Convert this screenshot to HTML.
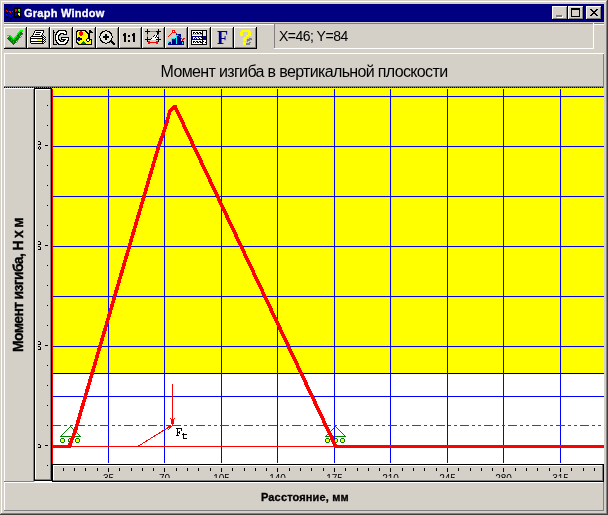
<!DOCTYPE html>
<html><head><meta charset="utf-8"><style>
html,body{margin:0;padding:0;}
body{width:608px;height:515px;position:relative;overflow:hidden;background:#d4d0c8;font-family:"Liberation Sans",sans-serif;}
div{position:absolute;}
.t{will-change:transform;}
</style></head><body>
<div style="left:1px;top:1px;width:605px;height:1px;background:#ffffff;"></div>
<div style="left:1px;top:1px;width:1px;height:512px;background:#ffffff;"></div>
<div style="left:606px;top:1px;width:1px;height:513px;background:#808080;"></div>
<div style="left:1px;top:513px;width:606px;height:1px;background:#808080;"></div>
<div style="left:607px;top:0px;width:1px;height:515px;background:#404040;"></div>
<div style="left:0px;top:514px;width:608px;height:1px;background:#404040;"></div>
<div style="left:4px;top:4px;width:600px;height:18px;background:#000080;"></div>
<div style="left:4px;top:23px;width:600px;height:1px;background:#808080;"></div>
<div style="left:4px;top:24px;width:270px;height:1px;background:#ffffff;"></div>
<div style="left:594px;top:24px;width:10px;height:1px;background:#ffffff;"></div>
<div style="left:4px;top:27px;width:22px;height:1px;background:#ffffff;"></div>
<div style="left:4px;top:27px;width:1px;height:21px;background:#ffffff;"></div>
<div style="left:25px;top:28px;width:1px;height:20px;background:#808080;"></div>
<div style="left:5px;top:47px;width:21px;height:1px;background:#808080;"></div>
<div style="left:26px;top:27px;width:1px;height:22px;background:#000;"></div>
<div style="left:4px;top:48px;width:23px;height:1px;background:#000;"></div>
<div style="left:27px;top:27px;width:22px;height:1px;background:#ffffff;"></div>
<div style="left:27px;top:27px;width:1px;height:21px;background:#ffffff;"></div>
<div style="left:48px;top:28px;width:1px;height:20px;background:#808080;"></div>
<div style="left:28px;top:47px;width:21px;height:1px;background:#808080;"></div>
<div style="left:49px;top:27px;width:1px;height:22px;background:#000;"></div>
<div style="left:27px;top:48px;width:23px;height:1px;background:#000;"></div>
<div style="left:50px;top:27px;width:22px;height:1px;background:#ffffff;"></div>
<div style="left:50px;top:27px;width:1px;height:21px;background:#ffffff;"></div>
<div style="left:71px;top:28px;width:1px;height:20px;background:#808080;"></div>
<div style="left:51px;top:47px;width:21px;height:1px;background:#808080;"></div>
<div style="left:72px;top:27px;width:1px;height:22px;background:#000;"></div>
<div style="left:50px;top:48px;width:23px;height:1px;background:#000;"></div>
<div style="left:73px;top:27px;width:22px;height:1px;background:#ffffff;"></div>
<div style="left:73px;top:27px;width:1px;height:21px;background:#ffffff;"></div>
<div style="left:94px;top:28px;width:1px;height:20px;background:#808080;"></div>
<div style="left:74px;top:47px;width:21px;height:1px;background:#808080;"></div>
<div style="left:95px;top:27px;width:1px;height:22px;background:#000;"></div>
<div style="left:73px;top:48px;width:23px;height:1px;background:#000;"></div>
<div style="left:96px;top:27px;width:22px;height:1px;background:#ffffff;"></div>
<div style="left:96px;top:27px;width:1px;height:21px;background:#ffffff;"></div>
<div style="left:117px;top:28px;width:1px;height:20px;background:#808080;"></div>
<div style="left:97px;top:47px;width:21px;height:1px;background:#808080;"></div>
<div style="left:118px;top:27px;width:1px;height:22px;background:#000;"></div>
<div style="left:96px;top:48px;width:23px;height:1px;background:#000;"></div>
<div style="left:119px;top:27px;width:22px;height:1px;background:#ffffff;"></div>
<div style="left:119px;top:27px;width:1px;height:21px;background:#ffffff;"></div>
<div style="left:140px;top:28px;width:1px;height:20px;background:#808080;"></div>
<div style="left:120px;top:47px;width:21px;height:1px;background:#808080;"></div>
<div style="left:141px;top:27px;width:1px;height:22px;background:#000;"></div>
<div style="left:119px;top:48px;width:23px;height:1px;background:#000;"></div>
<div style="left:142px;top:27px;width:22px;height:1px;background:#ffffff;"></div>
<div style="left:142px;top:27px;width:1px;height:21px;background:#ffffff;"></div>
<div style="left:163px;top:28px;width:1px;height:20px;background:#808080;"></div>
<div style="left:143px;top:47px;width:21px;height:1px;background:#808080;"></div>
<div style="left:164px;top:27px;width:1px;height:22px;background:#000;"></div>
<div style="left:142px;top:48px;width:23px;height:1px;background:#000;"></div>
<div style="left:165px;top:27px;width:22px;height:1px;background:#ffffff;"></div>
<div style="left:165px;top:27px;width:1px;height:21px;background:#ffffff;"></div>
<div style="left:186px;top:28px;width:1px;height:20px;background:#808080;"></div>
<div style="left:166px;top:47px;width:21px;height:1px;background:#808080;"></div>
<div style="left:187px;top:27px;width:1px;height:22px;background:#000;"></div>
<div style="left:165px;top:48px;width:23px;height:1px;background:#000;"></div>
<div style="left:188px;top:27px;width:22px;height:1px;background:#ffffff;"></div>
<div style="left:188px;top:27px;width:1px;height:21px;background:#ffffff;"></div>
<div style="left:209px;top:28px;width:1px;height:20px;background:#808080;"></div>
<div style="left:189px;top:47px;width:21px;height:1px;background:#808080;"></div>
<div style="left:210px;top:27px;width:1px;height:22px;background:#000;"></div>
<div style="left:188px;top:48px;width:23px;height:1px;background:#000;"></div>
<div style="left:211px;top:27px;width:22px;height:1px;background:#ffffff;"></div>
<div style="left:211px;top:27px;width:1px;height:21px;background:#ffffff;"></div>
<div style="left:232px;top:28px;width:1px;height:20px;background:#808080;"></div>
<div style="left:212px;top:47px;width:21px;height:1px;background:#808080;"></div>
<div style="left:233px;top:27px;width:1px;height:22px;background:#000;"></div>
<div style="left:211px;top:48px;width:23px;height:1px;background:#000;"></div>
<div style="left:234px;top:27px;width:22px;height:1px;background:#ffffff;"></div>
<div style="left:234px;top:27px;width:1px;height:21px;background:#ffffff;"></div>
<div style="left:255px;top:28px;width:1px;height:20px;background:#808080;"></div>
<div style="left:235px;top:47px;width:21px;height:1px;background:#808080;"></div>
<div style="left:256px;top:27px;width:1px;height:22px;background:#000;"></div>
<div style="left:234px;top:48px;width:23px;height:1px;background:#000;"></div>
<div style="left:274px;top:23px;width:319px;height:1px;background:#808080;"></div>
<div style="left:274px;top:23px;width:1px;height:25px;background:#808080;"></div>
<div style="left:274px;top:48px;width:320px;height:1px;background:#ffffff;"></div>
<div style="left:593px;top:23px;width:1px;height:26px;background:#ffffff;"></div>
<div style="left:4px;top:53px;width:600px;height:1px;background:#ffffff;"></div>
<div style="left:4px;top:53px;width:1px;height:34px;background:#ffffff;"></div>
<div style="left:603px;top:54px;width:1px;height:33px;background:#808080;"></div>
<div style="left:4px;top:86px;width:600px;height:1px;background:#808080;"></div>
<div style="left:4px;top:87px;width:600px;height:1px;background:repeating-linear-gradient(90deg,#000 0 1px,#808080 1px 2px)"></div>
<div style="left:4px;top:88px;width:30px;height:1px;background:#ffffff;"></div>
<div style="left:4px;top:88px;width:1px;height:393px;background:#ffffff;"></div>
<div style="left:33px;top:89px;width:1px;height:393px;background:#808080;"></div>
<div style="left:4px;top:481px;width:30px;height:1px;background:#808080;"></div>
<div style="left:34px;top:88px;width:18px;height:1px;background:#000;"></div>
<div style="left:34px;top:88px;width:1px;height:393px;background:#000;"></div>
<div style="left:51px;top:88px;width:1px;height:393px;background:#000;"></div>
<div style="left:34px;top:480px;width:18px;height:1px;background:#000;"></div>
<div style="left:35px;top:89px;width:15px;height:1px;background:#ffffff;"></div>
<div style="left:35px;top:89px;width:1px;height:390px;background:#ffffff;"></div>
<div style="left:50px;top:89px;width:1px;height:391px;background:#808080;"></div>
<div style="left:35px;top:479px;width:16px;height:1px;background:#808080;"></div>
<div style="left:4px;top:482px;width:600px;height:1px;background:#ffffff;"></div>
<div style="left:35px;top:481px;width:17px;height:1px;background:#ffffff;"></div>
<div style="left:4px;top:482px;width:1px;height:29px;background:#ffffff;"></div>
<div style="left:603px;top:482px;width:1px;height:29px;background:#808080;"></div>
<div style="left:4px;top:510px;width:600px;height:1px;background:#808080;"></div>
<div style="left:52px;top:464px;width:552px;height:1px;background:#000;"></div>
<div style="left:52px;top:464px;width:1px;height:18px;background:#000;"></div>
<div style="left:603px;top:464px;width:1px;height:18px;background:#000;"></div>
<div style="left:52px;top:481px;width:552px;height:1px;background:#000;"></div>
<div style="left:53px;top:465px;width:549px;height:1px;background:#ffffff;"></div>
<div style="left:53px;top:465px;width:1px;height:15px;background:#ffffff;"></div>
<div style="left:602px;top:465px;width:1px;height:16px;background:#808080;"></div>
<div style="left:53px;top:480px;width:550px;height:1px;background:#808080;"></div>
<svg style="position:absolute;left:0;top:0" width="608" height="515" shape-rendering="crispEdges"><rect x="53" y="88" width="551" height="285" fill="#ffff00"/><rect x="52" y="88" width="1" height="1" fill="#ffff00"/><rect x="53" y="373" width="551" height="1" fill="#000000"/><rect x="53" y="374" width="551" height="90" fill="#ffffff"/><rect x="52" y="89" width="1" height="375" fill="#ff0000"/><rect x="70" y="426" width="1" height="1" fill="#008000"/><rect x="70" y="426" width="1" height="1" fill="#008000"/><rect x="69" y="427" width="1" height="1" fill="#008000"/><rect x="71" y="427" width="1" height="1" fill="#008000"/><rect x="68" y="428" width="1" height="1" fill="#008000"/><rect x="72" y="428" width="1" height="1" fill="#008000"/><rect x="67" y="429" width="1" height="1" fill="#008000"/><rect x="73" y="429" width="1" height="1" fill="#008000"/><rect x="66" y="430" width="1" height="1" fill="#008000"/><rect x="74" y="430" width="1" height="1" fill="#008000"/><rect x="65" y="431" width="1" height="1" fill="#008000"/><rect x="75" y="431" width="1" height="1" fill="#008000"/><rect x="64" y="432" width="1" height="1" fill="#008000"/><rect x="76" y="432" width="1" height="1" fill="#008000"/><rect x="63" y="433" width="1" height="1" fill="#008000"/><rect x="77" y="433" width="1" height="1" fill="#008000"/><rect x="62" y="434" width="1" height="1" fill="#008000"/><rect x="78" y="434" width="1" height="1" fill="#008000"/><rect x="61" y="435" width="1" height="1" fill="#008000"/><rect x="79" y="435" width="1" height="1" fill="#008000"/><rect x="60" y="436" width="1" height="1" fill="#008000"/><rect x="80" y="436" width="1" height="1" fill="#008000"/><rect x="60" y="436" width="21" height="1" fill="#008000"/><rect x="61" y="438" width="3" height="1" fill="#008000"/><rect x="60" y="439" width="1" height="3" fill="#008000"/><rect x="64" y="439" width="1" height="3" fill="#008000"/><rect x="61" y="442" width="3" height="1" fill="#008000"/><rect x="61" y="439" width="3" height="3" fill="#ffff00"/><rect x="69" y="438" width="3" height="1" fill="#008000"/><rect x="68" y="439" width="1" height="3" fill="#008000"/><rect x="72" y="439" width="1" height="3" fill="#008000"/><rect x="69" y="442" width="3" height="1" fill="#008000"/><rect x="69" y="439" width="3" height="3" fill="#ffff00"/><rect x="76" y="438" width="3" height="1" fill="#008000"/><rect x="75" y="439" width="1" height="3" fill="#008000"/><rect x="79" y="439" width="1" height="3" fill="#008000"/><rect x="76" y="442" width="3" height="1" fill="#008000"/><rect x="76" y="439" width="3" height="3" fill="#ffff00"/><rect x="335" y="426" width="1" height="1" fill="#008000"/><rect x="335" y="426" width="1" height="1" fill="#008000"/><rect x="334" y="427" width="1" height="1" fill="#008000"/><rect x="336" y="427" width="1" height="1" fill="#008000"/><rect x="333" y="428" width="1" height="1" fill="#008000"/><rect x="337" y="428" width="1" height="1" fill="#008000"/><rect x="332" y="429" width="1" height="1" fill="#008000"/><rect x="338" y="429" width="1" height="1" fill="#008000"/><rect x="331" y="430" width="1" height="1" fill="#008000"/><rect x="339" y="430" width="1" height="1" fill="#008000"/><rect x="330" y="431" width="1" height="1" fill="#008000"/><rect x="340" y="431" width="1" height="1" fill="#008000"/><rect x="329" y="432" width="1" height="1" fill="#008000"/><rect x="341" y="432" width="1" height="1" fill="#008000"/><rect x="328" y="433" width="1" height="1" fill="#008000"/><rect x="342" y="433" width="1" height="1" fill="#008000"/><rect x="327" y="434" width="1" height="1" fill="#008000"/><rect x="343" y="434" width="1" height="1" fill="#008000"/><rect x="326" y="435" width="1" height="1" fill="#008000"/><rect x="344" y="435" width="1" height="1" fill="#008000"/><rect x="325" y="436" width="1" height="1" fill="#008000"/><rect x="345" y="436" width="1" height="1" fill="#008000"/><rect x="325" y="436" width="21" height="1" fill="#008000"/><rect x="326" y="438" width="3" height="1" fill="#008000"/><rect x="325" y="439" width="1" height="3" fill="#008000"/><rect x="329" y="439" width="1" height="3" fill="#008000"/><rect x="326" y="442" width="3" height="1" fill="#008000"/><rect x="326" y="439" width="3" height="3" fill="#ffff00"/><rect x="334" y="438" width="3" height="1" fill="#008000"/><rect x="333" y="439" width="1" height="3" fill="#008000"/><rect x="337" y="439" width="1" height="3" fill="#008000"/><rect x="334" y="442" width="3" height="1" fill="#008000"/><rect x="334" y="439" width="3" height="3" fill="#ffff00"/><rect x="341" y="438" width="3" height="1" fill="#008000"/><rect x="340" y="439" width="1" height="3" fill="#008000"/><rect x="344" y="439" width="1" height="3" fill="#008000"/><rect x="341" y="442" width="3" height="1" fill="#008000"/><rect x="341" y="439" width="3" height="3" fill="#ffff00"/><rect x="53" y="96" width="551" height="1" fill="#0000ff"/><rect x="53" y="146" width="551" height="1" fill="#0000ff"/><rect x="53" y="196" width="551" height="1" fill="#0000ff"/><rect x="53" y="246" width="551" height="1" fill="#0000ff"/><rect x="53" y="296" width="551" height="1" fill="#0000ff"/><rect x="53" y="346" width="551" height="1" fill="#0000ff"/><rect x="53" y="396" width="551" height="1" fill="#0000ff"/><rect x="53" y="446" width="551" height="1" fill="#0000ff"/><rect x="108" y="89" width="1" height="374" fill="#0000ff"/><rect x="164" y="89" width="1" height="374" fill="#0000ff"/><rect x="221" y="89" width="1" height="374" fill="#0000ff"/><rect x="277" y="89" width="1" height="374" fill="#0000ff"/><rect x="334" y="89" width="1" height="374" fill="#0000ff"/><rect x="390" y="89" width="1" height="374" fill="#0000ff"/><rect x="447" y="89" width="1" height="374" fill="#0000ff"/><rect x="503" y="89" width="1" height="374" fill="#0000ff"/><rect x="560" y="89" width="1" height="374" fill="#0000ff"/><rect x="53" y="425" width="8" height="1" fill="#ff0000"/><rect x="64" y="425" width="3" height="1" fill="#ff0000"/><rect x="70" y="425" width="3" height="1" fill="#ff0000"/><rect x="76" y="425" width="9" height="1" fill="#ff0000"/><rect x="88" y="425" width="3" height="1" fill="#ff0000"/><rect x="94" y="425" width="3" height="1" fill="#ff0000"/><rect x="100" y="425" width="9" height="1" fill="#ff0000"/><rect x="112" y="425" width="3" height="1" fill="#ff0000"/><rect x="118" y="425" width="3" height="1" fill="#ff0000"/><rect x="124" y="425" width="9" height="1" fill="#ff0000"/><rect x="136" y="425" width="3" height="1" fill="#ff0000"/><rect x="142" y="425" width="3" height="1" fill="#ff0000"/><rect x="148" y="425" width="9" height="1" fill="#ff0000"/><rect x="160" y="425" width="3" height="1" fill="#ff0000"/><rect x="166" y="425" width="3" height="1" fill="#ff0000"/><rect x="172" y="425" width="9" height="1" fill="#ff0000"/><rect x="184" y="425" width="3" height="1" fill="#ff0000"/><rect x="190" y="425" width="3" height="1" fill="#ff0000"/><rect x="196" y="425" width="9" height="1" fill="#ff0000"/><rect x="208" y="425" width="3" height="1" fill="#ff0000"/><rect x="214" y="425" width="3" height="1" fill="#ff0000"/><rect x="220" y="425" width="9" height="1" fill="#ff0000"/><rect x="232" y="425" width="3" height="1" fill="#ff0000"/><rect x="238" y="425" width="3" height="1" fill="#ff0000"/><rect x="244" y="425" width="9" height="1" fill="#ff0000"/><rect x="256" y="425" width="3" height="1" fill="#ff0000"/><rect x="262" y="425" width="3" height="1" fill="#ff0000"/><rect x="268" y="425" width="9" height="1" fill="#ff0000"/><rect x="280" y="425" width="3" height="1" fill="#ff0000"/><rect x="286" y="425" width="3" height="1" fill="#ff0000"/><rect x="292" y="425" width="9" height="1" fill="#ff0000"/><rect x="304" y="425" width="3" height="1" fill="#ff0000"/><rect x="310" y="425" width="3" height="1" fill="#ff0000"/><rect x="316" y="425" width="9" height="1" fill="#ff0000"/><rect x="328" y="425" width="3" height="1" fill="#ff0000"/><rect x="334" y="425" width="3" height="1" fill="#ff0000"/><rect x="340" y="425" width="9" height="1" fill="#ff0000"/><rect x="352" y="425" width="3" height="1" fill="#ff0000"/><rect x="358" y="425" width="3" height="1" fill="#ff0000"/><rect x="364" y="425" width="9" height="1" fill="#ff0000"/><rect x="376" y="425" width="3" height="1" fill="#ff0000"/><rect x="382" y="425" width="3" height="1" fill="#ff0000"/><rect x="388" y="425" width="9" height="1" fill="#ff0000"/><rect x="400" y="425" width="3" height="1" fill="#ff0000"/><rect x="406" y="425" width="3" height="1" fill="#ff0000"/><rect x="412" y="425" width="9" height="1" fill="#ff0000"/><rect x="424" y="425" width="3" height="1" fill="#ff0000"/><rect x="430" y="425" width="3" height="1" fill="#ff0000"/><rect x="436" y="425" width="9" height="1" fill="#ff0000"/><rect x="448" y="425" width="3" height="1" fill="#ff0000"/><rect x="454" y="425" width="3" height="1" fill="#ff0000"/><rect x="460" y="425" width="9" height="1" fill="#ff0000"/><rect x="472" y="425" width="3" height="1" fill="#ff0000"/><rect x="478" y="425" width="3" height="1" fill="#ff0000"/><rect x="484" y="425" width="9" height="1" fill="#ff0000"/><rect x="496" y="425" width="3" height="1" fill="#ff0000"/><rect x="502" y="425" width="3" height="1" fill="#ff0000"/><rect x="508" y="425" width="9" height="1" fill="#ff0000"/><rect x="520" y="425" width="3" height="1" fill="#ff0000"/><rect x="526" y="425" width="3" height="1" fill="#ff0000"/><rect x="532" y="425" width="9" height="1" fill="#ff0000"/><rect x="544" y="425" width="3" height="1" fill="#ff0000"/><rect x="550" y="425" width="3" height="1" fill="#ff0000"/><rect x="556" y="425" width="9" height="1" fill="#ff0000"/><rect x="568" y="425" width="3" height="1" fill="#ff0000"/><rect x="574" y="425" width="3" height="1" fill="#ff0000"/><rect x="580" y="425" width="9" height="1" fill="#ff0000"/><rect x="592" y="425" width="3" height="1" fill="#ff0000"/><rect x="598" y="425" width="3" height="1" fill="#ff0000"/><rect x="53" y="446" width="551" height="1" fill="#ff0000"/><polyline points="53,446.5 69.3,446.5 75.2,431 158.6,146.5 166.3,124.5 169.8,111 175,106.5 335.8,446.5 604,446.5" fill="none" stroke="#ff0000" stroke-width="3.6" stroke-linejoin="round" shape-rendering="crispEdges"/><rect x="172" y="384" width="1" height="41" fill="#ff0000"/><rect x="170" y="418" width="1" height="1" fill="#ff0000"/><rect x="174" y="418" width="1" height="1" fill="#ff0000"/><rect x="171" y="419" width="3" height="5" fill="#ff0000"/><line x1="138.5" y1="446" x2="171.5" y2="425.5" stroke="#ff0000" stroke-width="1" shape-rendering="crispEdges"/><rect x="166" y="425" width="1" height="1" fill="#ff0000"/><rect x="167" y="425" width="1" height="1" fill="#ff0000"/><rect x="168" y="425" width="1" height="1" fill="#ff0000"/><rect x="169" y="425" width="1" height="1" fill="#ff0000"/><rect x="170" y="425" width="1" height="1" fill="#ff0000"/><rect x="168" y="426" width="1" height="1" fill="#ff0000"/><rect x="169" y="426" width="1" height="1" fill="#ff0000"/><rect x="170" y="426" width="1" height="1" fill="#ff0000"/><rect x="171" y="426" width="1" height="1" fill="#ff0000"/><rect x="169" y="427" width="1" height="1" fill="#ff0000"/><rect x="170" y="427" width="1" height="1" fill="#ff0000"/><rect x="169" y="428" width="1" height="1" fill="#ff0000"/><rect x="168" y="429" width="1" height="1" fill="#ff0000"/><rect x="167" y="427" width="1" height="1" fill="#ff0000"/><rect x="176" y="428" width="1" height="1" fill="#000000"/><rect x="177" y="428" width="1" height="1" fill="#000000"/><rect x="178" y="428" width="1" height="1" fill="#000000"/><rect x="179" y="428" width="1" height="1" fill="#000000"/><rect x="180" y="428" width="1" height="1" fill="#000000"/><rect x="181" y="428" width="1" height="1" fill="#000000"/><rect x="177" y="429" width="1" height="1" fill="#000000"/><rect x="181" y="429" width="1" height="1" fill="#000000"/><rect x="177" y="430" width="1" height="1" fill="#000000"/><rect x="181" y="430" width="1" height="1" fill="#000000"/><rect x="177" y="431" width="1" height="1" fill="#000000"/><rect x="179" y="431" width="1" height="1" fill="#000000"/><rect x="177" y="432" width="1" height="1" fill="#000000"/><rect x="178" y="432" width="1" height="1" fill="#000000"/><rect x="179" y="432" width="1" height="1" fill="#000000"/><rect x="177" y="433" width="1" height="1" fill="#000000"/><rect x="179" y="433" width="1" height="1" fill="#000000"/><rect x="177" y="434" width="1" height="1" fill="#000000"/><rect x="176" y="435" width="1" height="1" fill="#000000"/><rect x="177" y="435" width="1" height="1" fill="#000000"/><rect x="178" y="435" width="1" height="1" fill="#000000"/><rect x="183" y="433" width="1" height="1" fill="#000000"/><rect x="182" y="434" width="1" height="1" fill="#000000"/><rect x="183" y="434" width="1" height="1" fill="#000000"/><rect x="184" y="434" width="1" height="1" fill="#000000"/><rect x="185" y="434" width="1" height="1" fill="#000000"/><rect x="186" y="434" width="1" height="1" fill="#000000"/><rect x="183" y="435" width="1" height="1" fill="#000000"/><rect x="183" y="436" width="1" height="1" fill="#000000"/><rect x="183" y="437" width="1" height="1" fill="#000000"/><rect x="183" y="438" width="1" height="1" fill="#000000"/><rect x="184" y="438" width="1" height="1" fill="#000000"/><rect x="185" y="438" width="1" height="1" fill="#000000"/><rect x="186" y="438" width="1" height="1" fill="#000000"/><rect x="47" y="105" width="1" height="1" fill="#000000"/><rect x="47" y="125" width="1" height="1" fill="#000000"/><rect x="45" y="145" width="3" height="1" fill="#000000"/><rect x="47" y="165" width="1" height="1" fill="#000000"/><rect x="47" y="185" width="1" height="1" fill="#000000"/><rect x="47" y="205" width="1" height="1" fill="#000000"/><rect x="47" y="225" width="1" height="1" fill="#000000"/><rect x="45" y="245" width="3" height="1" fill="#000000"/><rect x="47" y="265" width="1" height="1" fill="#000000"/><rect x="47" y="285" width="1" height="1" fill="#000000"/><rect x="47" y="305" width="1" height="1" fill="#000000"/><rect x="47" y="325" width="1" height="1" fill="#000000"/><rect x="45" y="345" width="3" height="1" fill="#000000"/><rect x="47" y="365" width="1" height="1" fill="#000000"/><rect x="47" y="385" width="1" height="1" fill="#000000"/><rect x="47" y="405" width="1" height="1" fill="#000000"/><rect x="47" y="425" width="1" height="1" fill="#000000"/><rect x="45" y="445" width="3" height="1" fill="#000000"/><rect x="47" y="465" width="1" height="1" fill="#000000"/><rect x="38" y="141" width="2" height="1" fill="#000000"/><rect x="40" y="142" width="1" height="2" fill="#000000"/><rect x="38" y="144" width="3" height="1" fill="#000000"/><rect x="39" y="146" width="1" height="1" fill="#000000"/><rect x="38" y="147" width="1" height="2" fill="#000000"/><rect x="40" y="147" width="1" height="2" fill="#000000"/><rect x="39" y="149" width="1" height="1" fill="#000000"/><rect x="38" y="241" width="2" height="1" fill="#000000"/><rect x="40" y="242" width="1" height="2" fill="#000000"/><rect x="38" y="244" width="3" height="1" fill="#000000"/><rect x="38" y="246" width="2" height="1" fill="#000000"/><rect x="40" y="247" width="1" height="2" fill="#000000"/><rect x="38" y="249" width="3" height="1" fill="#000000"/><rect x="38" y="341" width="2" height="1" fill="#000000"/><rect x="40" y="342" width="1" height="2" fill="#000000"/><rect x="38" y="344" width="3" height="1" fill="#000000"/><rect x="38" y="346" width="2" height="1" fill="#000000"/><rect x="40" y="347" width="1" height="2" fill="#000000"/><rect x="38" y="349" width="3" height="1" fill="#000000"/><rect x="38" y="444" width="2" height="1" fill="#000000"/><rect x="40" y="445" width="1" height="2" fill="#000000"/><rect x="38" y="447" width="3" height="1" fill="#000000"/><rect x="63" y="468" width="1" height="3" fill="#000000"/><rect x="74" y="468" width="1" height="3" fill="#000000"/><rect x="85" y="468" width="1" height="3" fill="#000000"/><rect x="97" y="468" width="1" height="3" fill="#000000"/><rect x="108" y="468" width="1" height="4" fill="#000000"/><rect x="119" y="468" width="1" height="3" fill="#000000"/><rect x="131" y="468" width="1" height="3" fill="#000000"/><rect x="142" y="468" width="1" height="3" fill="#000000"/><rect x="153" y="468" width="1" height="3" fill="#000000"/><rect x="164" y="468" width="1" height="4" fill="#000000"/><rect x="176" y="468" width="1" height="3" fill="#000000"/><rect x="187" y="468" width="1" height="3" fill="#000000"/><rect x="198" y="468" width="1" height="3" fill="#000000"/><rect x="210" y="468" width="1" height="3" fill="#000000"/><rect x="221" y="468" width="1" height="4" fill="#000000"/><rect x="232" y="468" width="1" height="3" fill="#000000"/><rect x="244" y="468" width="1" height="3" fill="#000000"/><rect x="255" y="468" width="1" height="3" fill="#000000"/><rect x="266" y="468" width="1" height="3" fill="#000000"/><rect x="277" y="468" width="1" height="4" fill="#000000"/><rect x="289" y="468" width="1" height="3" fill="#000000"/><rect x="300" y="468" width="1" height="3" fill="#000000"/><rect x="311" y="468" width="1" height="3" fill="#000000"/><rect x="323" y="468" width="1" height="3" fill="#000000"/><rect x="334" y="468" width="1" height="4" fill="#000000"/><rect x="345" y="468" width="1" height="3" fill="#000000"/><rect x="357" y="468" width="1" height="3" fill="#000000"/><rect x="368" y="468" width="1" height="3" fill="#000000"/><rect x="379" y="468" width="1" height="3" fill="#000000"/><rect x="390" y="468" width="1" height="4" fill="#000000"/><rect x="402" y="468" width="1" height="3" fill="#000000"/><rect x="413" y="468" width="1" height="3" fill="#000000"/><rect x="424" y="468" width="1" height="3" fill="#000000"/><rect x="436" y="468" width="1" height="3" fill="#000000"/><rect x="447" y="468" width="1" height="4" fill="#000000"/><rect x="458" y="468" width="1" height="3" fill="#000000"/><rect x="470" y="468" width="1" height="3" fill="#000000"/><rect x="481" y="468" width="1" height="3" fill="#000000"/><rect x="492" y="468" width="1" height="3" fill="#000000"/><rect x="503" y="468" width="1" height="4" fill="#000000"/><rect x="515" y="468" width="1" height="3" fill="#000000"/><rect x="526" y="468" width="1" height="3" fill="#000000"/><rect x="537" y="468" width="1" height="3" fill="#000000"/><rect x="549" y="468" width="1" height="3" fill="#000000"/><rect x="560" y="468" width="1" height="4" fill="#000000"/><rect x="571" y="468" width="1" height="3" fill="#000000"/><rect x="583" y="468" width="1" height="3" fill="#000000"/><rect x="594" y="468" width="1" height="3" fill="#000000"/></svg>
<div class="t" style="left:53px;top:466px;width:549px;height:12px;overflow:hidden"><div style="left:35px;top:7px;width:41px;text-align:center;font-size:10px;line-height:10px;margin-top:1px;color:#000">35</div><div style="left:91px;top:7px;width:41px;text-align:center;font-size:10px;line-height:10px;margin-top:1px;color:#000">70</div><div style="left:148px;top:7px;width:41px;text-align:center;font-size:10px;line-height:10px;margin-top:1px;color:#000">105</div><div style="left:204px;top:7px;width:41px;text-align:center;font-size:10px;line-height:10px;margin-top:1px;color:#000">140</div><div style="left:261px;top:7px;width:41px;text-align:center;font-size:10px;line-height:10px;margin-top:1px;color:#000">175</div><div style="left:317px;top:7px;width:41px;text-align:center;font-size:10px;line-height:10px;margin-top:1px;color:#000">210</div><div style="left:374px;top:7px;width:41px;text-align:center;font-size:10px;line-height:10px;margin-top:1px;color:#000">245</div><div style="left:430px;top:7px;width:41px;text-align:center;font-size:10px;line-height:10px;margin-top:1px;color:#000">280</div><div style="left:487px;top:7px;width:41px;text-align:center;font-size:10px;line-height:10px;margin-top:1px;color:#000">315</div></div>
<svg style="position:absolute;left:0;top:0" width="608" height="515" shape-rendering="crispEdges"><rect x="15" y="7" width="5" height="1" fill="#000"/><rect x="14" y="8" width="7" height="10" fill="#000"/><rect x="15" y="9" width="1" height="1" fill="#ff0000"/><rect x="16" y="9" width="1" height="1" fill="#ff0000"/><rect x="15" y="10" width="1" height="1" fill="#ff0000"/><rect x="16" y="10" width="1" height="1" fill="#ff0000"/><rect x="15" y="11" width="1" height="1" fill="#ff0000"/><rect x="18" y="9" width="1" height="1" fill="#00ff00"/><rect x="19" y="9" width="1" height="1" fill="#00ff00"/><rect x="18" y="10" width="1" height="1" fill="#00ff00"/><rect x="19" y="10" width="1" height="1" fill="#00ff00"/><rect x="19" y="11" width="1" height="1" fill="#00ff00"/><rect x="15" y="13" width="1" height="1" fill="#0000ff"/><rect x="16" y="13" width="1" height="1" fill="#0000ff"/><rect x="15" y="14" width="1" height="1" fill="#0000ff"/><rect x="16" y="14" width="1" height="1" fill="#0000ff"/><rect x="15" y="15" width="1" height="1" fill="#0000ff"/><rect x="18" y="13" width="1" height="1" fill="#ffff00"/><rect x="19" y="13" width="1" height="1" fill="#ffff00"/><rect x="18" y="14" width="1" height="1" fill="#ffff00"/><rect x="19" y="14" width="1" height="1" fill="#ffff00"/><rect x="19" y="15" width="1" height="1" fill="#ffff00"/><rect x="6" y="8" width="1" height="1" fill="#000"/><rect x="7" y="9" width="1" height="1" fill="#000"/><rect x="9" y="9" width="1" height="1" fill="#000"/><rect x="10" y="9" width="1" height="1" fill="#000"/><rect x="12" y="9" width="1" height="1" fill="#000"/><rect x="6" y="12" width="1" height="1" fill="#000"/><rect x="10" y="13" width="1" height="1" fill="#000"/><rect x="12" y="13" width="1" height="1" fill="#000"/><rect x="6" y="16" width="1" height="1" fill="#000"/><rect x="7" y="17" width="1" height="1" fill="#000"/><rect x="10" y="17" width="1" height="1" fill="#000"/><rect x="10" y="18" width="1" height="1" fill="#000"/><rect x="12" y="17" width="1" height="1" fill="#000"/><rect x="7" y="13" width="1" height="1" fill="#000"/><rect x="9" y="17" width="1" height="1" fill="#000"/><rect x="6" y="10" width="1" height="1" fill="#ff0000"/><rect x="7" y="11" width="1" height="1" fill="#ff0000"/><rect x="9" y="11" width="1" height="1" fill="#ff0000"/><rect x="10" y="11" width="1" height="1" fill="#ff0000"/><rect x="10" y="12" width="1" height="1" fill="#ff0000"/><rect x="12" y="11" width="1" height="1" fill="#ff0000"/><rect x="6" y="14" width="1" height="1" fill="#0000ff"/><rect x="7" y="15" width="1" height="1" fill="#0000ff"/><rect x="9" y="15" width="1" height="1" fill="#0000ff"/><rect x="10" y="15" width="1" height="1" fill="#0000ff"/><rect x="10" y="16" width="1" height="1" fill="#0000ff"/><rect x="12" y="15" width="1" height="1" fill="#0000ff"/><rect x="552" y="6" width="16" height="14" fill="#d4d0c8"/><rect x="552" y="6" width="15" height="1" fill="#fff"/><rect x="552" y="6" width="1" height="13" fill="#fff"/><rect x="566" y="7" width="1" height="12" fill="#808080"/><rect x="553" y="18" width="14" height="1" fill="#808080"/><rect x="567" y="6" width="1" height="14" fill="#000"/><rect x="552" y="19" width="16" height="1" fill="#000"/><rect x="568" y="6" width="16" height="14" fill="#d4d0c8"/><rect x="568" y="6" width="15" height="1" fill="#fff"/><rect x="568" y="6" width="1" height="13" fill="#fff"/><rect x="582" y="7" width="1" height="12" fill="#808080"/><rect x="569" y="18" width="14" height="1" fill="#808080"/><rect x="583" y="6" width="1" height="14" fill="#000"/><rect x="568" y="19" width="16" height="1" fill="#000"/><rect x="586" y="6" width="16" height="14" fill="#d4d0c8"/><rect x="586" y="6" width="15" height="1" fill="#fff"/><rect x="586" y="6" width="1" height="13" fill="#fff"/><rect x="600" y="7" width="1" height="12" fill="#808080"/><rect x="587" y="18" width="14" height="1" fill="#808080"/><rect x="601" y="6" width="1" height="14" fill="#000"/><rect x="586" y="19" width="16" height="1" fill="#000"/><rect x="556" y="15" width="6" height="2" fill="#808080"/><rect x="557" y="17" width="6" height="1" fill="#fff"/><rect x="562" y="16" width="1" height="1" fill="#fff"/><rect x="571" y="8" width="9" height="2" fill="#000"/><rect x="571" y="10" width="1" height="7" fill="#000"/><rect x="579" y="10" width="1" height="7" fill="#000"/><rect x="571" y="16" width="9" height="1" fill="#000"/><rect x="590" y="9" width="2" height="1" fill="#000"/><rect x="596" y="9" width="2" height="1" fill="#000"/><rect x="591" y="10" width="2" height="1" fill="#000"/><rect x="595" y="10" width="2" height="1" fill="#000"/><rect x="592" y="11" width="2" height="1" fill="#000"/><rect x="594" y="11" width="2" height="1" fill="#000"/><rect x="593" y="12" width="2" height="1" fill="#000"/><rect x="593" y="12" width="2" height="1" fill="#000"/><rect x="594" y="13" width="2" height="1" fill="#000"/><rect x="592" y="13" width="2" height="1" fill="#000"/><rect x="595" y="14" width="2" height="1" fill="#000"/><rect x="591" y="14" width="2" height="1" fill="#000"/><rect x="596" y="15" width="2" height="1" fill="#000"/><rect x="590" y="15" width="2" height="1" fill="#000"/><polyline points="9,40 14,45 23,34" fill="none" stroke="#808080" stroke-width="1" stroke-dasharray="1 1"/><polyline points="8.5,37.5 13.5,42.5 21.5,32.5" fill="none" stroke="#008000" stroke-width="3.4"/><polyline points="7,35.5 10,35.5 13.5,39.5 20,31 23,31" fill="none" stroke="#00ff00" stroke-width="1.2"/><polyline points="9,37.5 13.5,42 21,33" fill="none" stroke="#808000" stroke-width="1" stroke-dasharray="1 2"/><rect x="35" y="30" width="9" height="1" fill="#000"/><rect x="34" y="31" width="1" height="1" fill="#000"/><rect x="35" y="31" width="8" height="1" fill="#fff"/><rect x="43" y="31" width="1" height="1" fill="#000"/><rect x="34" y="32" width="1" height="1" fill="#000"/><rect x="35" y="32" width="1" height="1" fill="#fff"/><rect x="36" y="32" width="5" height="1" fill="#000"/><rect x="41" y="32" width="2" height="1" fill="#fff"/><rect x="43" y="32" width="1" height="1" fill="#000"/><rect x="33" y="33" width="1" height="1" fill="#000"/><rect x="34" y="33" width="8" height="1" fill="#fff"/><rect x="42" y="33" width="1" height="1" fill="#000"/><rect x="33" y="34" width="1" height="1" fill="#000"/><rect x="34" y="34" width="1" height="1" fill="#fff"/><rect x="35" y="34" width="5" height="1" fill="#000"/><rect x="40" y="34" width="2" height="1" fill="#fff"/><rect x="42" y="34" width="1" height="1" fill="#000"/><rect x="32" y="35" width="1" height="1" fill="#000"/><rect x="33" y="35" width="8" height="1" fill="#fff"/><rect x="41" y="35" width="1" height="1" fill="#000"/><rect x="31" y="36" width="12" height="1" fill="#000"/><rect x="30" y="37" width="1" height="1" fill="#000"/><rect x="31" y="37" width="11" height="1" fill="#fff"/><rect x="42" y="37" width="1" height="1" fill="#000"/><rect x="30" y="38" width="13" height="1" fill="#000"/><rect x="30" y="39" width="1" height="1" fill="#000"/><rect x="31" y="39" width="6" height="1" fill="#fff"/><rect x="37" y="39" width="4" height="1" fill="#c8c8f0"/><rect x="41" y="39" width="1" height="1" fill="#fff"/><rect x="42" y="39" width="1" height="1" fill="#000"/><rect x="30" y="40" width="1" height="1" fill="#000"/><rect x="31" y="40" width="6" height="1" fill="#fff"/><rect x="37" y="40" width="4" height="1" fill="#ffff00"/><rect x="41" y="40" width="1" height="1" fill="#fff"/><rect x="42" y="40" width="1" height="1" fill="#000"/><rect x="30" y="41" width="13" height="1" fill="#000"/><rect x="30" y="42" width="1" height="1" fill="#000"/><rect x="31" y="42" width="11" height="1" fill="#fff"/><rect x="42" y="42" width="1" height="1" fill="#000"/><rect x="31" y="43" width="12" height="1" fill="#000"/><rect x="43" y="35" width="1" height="1" fill="#000"/><rect x="44" y="35" width="1" height="1" fill="#fff"/><rect x="43" y="36" width="1" height="1" fill="#fff"/><rect x="44" y="36" width="1" height="1" fill="#000"/><rect x="43" y="37" width="1" height="1" fill="#000"/><rect x="44" y="37" width="1" height="1" fill="#fff"/><rect x="45" y="37" width="1" height="1" fill="#000"/><rect x="43" y="38" width="1" height="1" fill="#fff"/><rect x="44" y="38" width="1" height="1" fill="#000"/><rect x="43" y="39" width="1" height="1" fill="#000"/><rect x="44" y="39" width="1" height="1" fill="#fff"/><rect x="45" y="39" width="1" height="1" fill="#000"/><rect x="43" y="40" width="1" height="1" fill="#fff"/><rect x="44" y="40" width="1" height="1" fill="#000"/><rect x="43" y="41" width="1" height="1" fill="#000"/><rect x="44" y="41" width="1" height="1" fill="#fff"/><rect x="45" y="41" width="1" height="1" fill="#000"/><rect x="43" y="42" width="1" height="1" fill="#fff"/><rect x="44" y="42" width="1" height="1" fill="#000"/><rect x="43" y="43" width="1" height="1" fill="#000"/><rect x="44" y="43" width="1" height="1" fill="#fff"/><rect x="66" y="39" width="1" height="1" fill="#fff"/><rect x="57" y="33" width="1" height="1" fill="#fff"/><rect x="57" y="39" width="1" height="1" fill="#fff"/><rect x="65" y="40" width="1" height="1" fill="#fff"/><rect x="57" y="36" width="1" height="1" fill="#fff"/><rect x="62" y="32" width="1" height="1" fill="#fff"/><rect x="63" y="31" width="1" height="1" fill="#fff"/><rect x="64" y="32" width="1" height="1" fill="#fff"/><rect x="62" y="38" width="1" height="1" fill="#fff"/><rect x="64" y="41" width="1" height="1" fill="#fff"/><rect x="63" y="43" width="1" height="1" fill="#fff"/><rect x="56" y="37" width="1" height="1" fill="#fff"/><rect x="64" y="38" width="1" height="1" fill="#fff"/><rect x="58" y="34" width="1" height="1" fill="#fff"/><rect x="59" y="33" width="1" height="1" fill="#fff"/><rect x="59" y="42" width="1" height="1" fill="#fff"/><rect x="60" y="31" width="1" height="1" fill="#fff"/><rect x="58" y="40" width="1" height="1" fill="#fff"/><rect x="61" y="42" width="1" height="1" fill="#fff"/><rect x="60" y="43" width="1" height="1" fill="#fff"/><rect x="65" y="33" width="1" height="1" fill="#fff"/><rect x="66" y="38" width="1" height="1" fill="#fff"/><rect x="57" y="35" width="1" height="1" fill="#fff"/><rect x="65" y="42" width="1" height="1" fill="#fff"/><rect x="66" y="41" width="1" height="1" fill="#fff"/><rect x="57" y="38" width="1" height="1" fill="#fff"/><rect x="57" y="41" width="1" height="1" fill="#fff"/><rect x="62" y="31" width="1" height="1" fill="#fff"/><rect x="63" y="42" width="1" height="1" fill="#fff"/><rect x="64" y="31" width="1" height="1" fill="#fff"/><rect x="62" y="43" width="1" height="1" fill="#fff"/><rect x="56" y="39" width="1" height="1" fill="#fff"/><rect x="67" y="39" width="1" height="1" fill="#fff"/><rect x="56" y="36" width="1" height="1" fill="#fff"/><rect x="64" y="43" width="1" height="1" fill="#fff"/><rect x="61" y="32" width="1" height="1" fill="#fff"/><rect x="58" y="33" width="1" height="1" fill="#fff"/><rect x="59" y="32" width="1" height="1" fill="#fff"/><rect x="58" y="42" width="1" height="1" fill="#fff"/><rect x="59" y="41" width="1" height="1" fill="#fff"/><rect x="60" y="42" width="1" height="1" fill="#fff"/><rect x="65" y="32" width="1" height="1" fill="#fff"/><rect x="65" y="41" width="1" height="1" fill="#fff"/><rect x="66" y="40" width="1" height="1" fill="#fff"/><rect x="57" y="37" width="1" height="1" fill="#fff"/><rect x="65" y="38" width="1" height="1" fill="#fff"/><rect x="57" y="34" width="1" height="1" fill="#fff"/><rect x="57" y="40" width="1" height="1" fill="#fff"/><rect x="63" y="32" width="1" height="1" fill="#fff"/><rect x="63" y="38" width="1" height="1" fill="#fff"/><rect x="64" y="33" width="1" height="1" fill="#fff"/><rect x="62" y="42" width="1" height="1" fill="#fff"/><rect x="56" y="35" width="1" height="1" fill="#fff"/><rect x="64" y="42" width="1" height="1" fill="#fff"/><rect x="58" y="32" width="1" height="1" fill="#fff"/><rect x="59" y="31" width="1" height="1" fill="#fff"/><rect x="56" y="38" width="1" height="1" fill="#fff"/><rect x="67" y="38" width="1" height="1" fill="#fff"/><rect x="60" y="32" width="1" height="1" fill="#fff"/><rect x="61" y="31" width="1" height="1" fill="#fff"/><rect x="59" y="43" width="1" height="1" fill="#fff"/><rect x="58" y="41" width="1" height="1" fill="#fff"/><rect x="61" y="43" width="1" height="1" fill="#fff"/><rect x="65" y="43" width="1" height="1" fill="#000"/><rect x="63" y="34" width="1" height="1" fill="#000"/><rect x="62" y="44" width="1" height="1" fill="#000"/><rect x="58" y="31" width="1" height="1" fill="#000"/><rect x="59" y="39" width="1" height="1" fill="#000"/><rect x="66" y="32" width="1" height="1" fill="#000"/><rect x="62" y="37" width="1" height="1" fill="#000"/><rect x="64" y="34" width="1" height="1" fill="#000"/><rect x="60" y="30" width="1" height="1" fill="#000"/><rect x="61" y="38" width="1" height="1" fill="#000"/><rect x="62" y="30" width="1" height="1" fill="#000"/><rect x="57" y="43" width="1" height="1" fill="#000"/><rect x="62" y="39" width="1" height="1" fill="#000"/><rect x="56" y="32" width="1" height="1" fill="#000"/><rect x="55" y="36" width="1" height="1" fill="#000"/><rect x="58" y="35" width="1" height="1" fill="#000"/><rect x="59" y="34" width="1" height="1" fill="#000"/><rect x="58" y="44" width="1" height="1" fill="#000"/><rect x="60" y="41" width="1" height="1" fill="#000"/><rect x="65" y="31" width="1" height="1" fill="#000"/><rect x="63" y="40" width="1" height="1" fill="#000"/><rect x="67" y="40" width="1" height="1" fill="#000"/><rect x="58" y="37" width="1" height="1" fill="#000"/><rect x="55" y="38" width="1" height="1" fill="#000"/><rect x="60" y="34" width="1" height="1" fill="#000"/><rect x="61" y="33" width="1" height="1" fill="#000"/><rect x="68" y="38" width="1" height="1" fill="#000"/><rect x="63" y="33" width="1" height="1" fill="#000"/><rect x="58" y="30" width="1" height="1" fill="#000"/><rect x="67" y="42" width="1" height="1" fill="#000"/><rect x="58" y="39" width="1" height="1" fill="#000"/><rect x="55" y="40" width="1" height="1" fill="#000"/><rect x="61" y="44" width="1" height="1" fill="#000"/><rect x="66" y="34" width="1" height="1" fill="#000"/><rect x="57" y="31" width="1" height="1" fill="#000"/><rect x="65" y="44" width="1" height="1" fill="#000"/><rect x="66" y="43" width="1" height="1" fill="#000"/><rect x="68" y="40" width="1" height="1" fill="#000"/><rect x="56" y="41" width="1" height="1" fill="#000"/><rect x="59" y="40" width="1" height="1" fill="#000"/><rect x="61" y="37" width="1" height="1" fill="#000"/><rect x="65" y="37" width="1" height="1" fill="#000"/><rect x="57" y="42" width="1" height="1" fill="#000"/><rect x="63" y="37" width="1" height="1" fill="#000"/><rect x="62" y="41" width="1" height="1" fill="#000"/><rect x="67" y="37" width="1" height="1" fill="#000"/><rect x="55" y="35" width="1" height="1" fill="#000"/><rect x="56" y="34" width="1" height="1" fill="#000"/><rect x="61" y="30" width="1" height="1" fill="#000"/><rect x="61" y="39" width="1" height="1" fill="#000"/><rect x="65" y="30" width="1" height="1" fill="#000"/><rect x="65" y="39" width="1" height="1" fill="#000"/><rect x="63" y="30" width="1" height="1" fill="#000"/><rect x="64" y="40" width="1" height="1" fill="#000"/><rect x="55" y="37" width="1" height="1" fill="#000"/><rect x="59" y="35" width="1" height="1" fill="#000"/><rect x="59" y="44" width="1" height="1" fill="#000"/><rect x="66" y="31" width="1" height="1" fill="#000"/><rect x="68" y="37" width="1" height="1" fill="#000"/><rect x="63" y="44" width="1" height="1" fill="#000"/><rect x="55" y="39" width="1" height="1" fill="#000"/><rect x="65" y="34" width="1" height="1" fill="#000"/><rect x="66" y="33" width="1" height="1" fill="#000"/><rect x="66" y="42" width="1" height="1" fill="#000"/><rect x="68" y="39" width="1" height="1" fill="#000"/><rect x="59" y="30" width="1" height="1" fill="#000"/><rect x="64" y="44" width="1" height="1" fill="#000"/><rect x="56" y="40" width="1" height="1" fill="#000"/><rect x="58" y="43" width="1" height="1" fill="#000"/><rect x="60" y="40" width="1" height="1" fill="#000"/><rect x="57" y="32" width="1" height="1" fill="#000"/><rect x="64" y="37" width="1" height="1" fill="#000"/><rect x="63" y="39" width="1" height="1" fill="#000"/><rect x="55" y="34" width="1" height="1" fill="#000"/><rect x="56" y="33" width="1" height="1" fill="#000"/><rect x="56" y="42" width="1" height="1" fill="#000"/><rect x="58" y="36" width="1" height="1" fill="#000"/><rect x="60" y="33" width="1" height="1" fill="#000"/><rect x="61" y="41" width="1" height="1" fill="#000"/><rect x="66" y="37" width="1" height="1" fill="#000"/><rect x="62" y="33" width="1" height="1" fill="#000"/><rect x="64" y="30" width="1" height="1" fill="#000"/><rect x="64" y="39" width="1" height="1" fill="#000"/><rect x="63" y="41" width="1" height="1" fill="#000"/><rect x="67" y="41" width="1" height="1" fill="#000"/><rect x="58" y="38" width="1" height="1" fill="#000"/><rect x="60" y="44" width="1" height="1" fill="#000"/><rect x="53" y="30" width="1" height="15" fill="#000"/><rect x="53" y="32" width="2" height="1" fill="#000"/><rect x="53" y="44" width="4" height="1" fill="#000"/><polygon points="78,30.5 85,30.5 88.5,34 88.5,38 91.5,40 91.5,44.5 79,44.5 76.5,42 76.5,32" fill="#ffff00" stroke="#000" stroke-width="1"/><rect x="79" y="32" width="4" height="3" fill="#ff0000"/><rect x="80" y="31" width="2" height="1" fill="#ff0000"/><rect x="80" y="35" width="2" height="1" fill="#ff0000"/><rect x="77" y="38" width="5" height="2" fill="#000080"/><rect x="78" y="37" width="2" height="1" fill="#000080"/><rect x="78" y="40" width="2" height="1" fill="#000080"/><polygon points="80.5,44 83.5,40.5 86.5,44" fill="#008000"/><rect x="89" y="30" width="1" height="8" fill="#000"/><rect x="88" y="34" width="1" height="4" fill="#000"/><rect x="90" y="30" width="1" height="3" fill="#000"/><rect x="91" y="31" width="1" height="2" fill="#000"/><rect x="92" y="32" width="1" height="1" fill="#000"/><rect x="87" y="38" width="1" height="1" fill="#000"/><rect x="88" y="38" width="1" height="1" fill="#000"/><rect x="86" y="39" width="1" height="1" fill="#000"/><rect x="86" y="40" width="1" height="1" fill="#000"/><rect x="89" y="39" width="1" height="1" fill="#000"/><rect x="89" y="40" width="1" height="1" fill="#000"/><rect x="87" y="41" width="1" height="1" fill="#000"/><rect x="88" y="41" width="1" height="1" fill="#000"/><rect x="87" y="39" width="1" height="1" fill="#fff"/><rect x="88" y="39" width="1" height="1" fill="#fff"/><rect x="87" y="40" width="1" height="1" fill="#fff"/><rect x="88" y="40" width="1" height="1" fill="#fff"/><rect x="105" y="30" width="1" height="1" fill="#000"/><rect x="106" y="30" width="1" height="1" fill="#000"/><rect x="102" y="31" width="1" height="1" fill="#000"/><rect x="103" y="31" width="1" height="1" fill="#000"/><rect x="104" y="31" width="1" height="1" fill="#000"/><rect x="105" y="31" width="1" height="1" fill="#e6e4de"/><rect x="106" y="31" width="1" height="1" fill="#e6e4de"/><rect x="107" y="31" width="1" height="1" fill="#000"/><rect x="108" y="31" width="1" height="1" fill="#000"/><rect x="109" y="31" width="1" height="1" fill="#000"/><rect x="101" y="32" width="1" height="1" fill="#000"/><rect x="102" y="32" width="1" height="1" fill="#000"/><rect x="103" y="32" width="1" height="1" fill="#e6e4de"/><rect x="104" y="32" width="1" height="1" fill="#e6e4de"/><rect x="105" y="32" width="1" height="1" fill="#e6e4de"/><rect x="106" y="32" width="1" height="1" fill="#e6e4de"/><rect x="107" y="32" width="1" height="1" fill="#e6e4de"/><rect x="108" y="32" width="1" height="1" fill="#e6e4de"/><rect x="109" y="32" width="1" height="1" fill="#000"/><rect x="110" y="32" width="1" height="1" fill="#000"/><rect x="100" y="33" width="1" height="1" fill="#000"/><rect x="101" y="33" width="1" height="1" fill="#000"/><rect x="102" y="33" width="1" height="1" fill="#e6e4de"/><rect x="103" y="33" width="1" height="1" fill="#e6e4de"/><rect x="104" y="33" width="1" height="1" fill="#e6e4de"/><rect x="105" y="33" width="1" height="1" fill="#e6e4de"/><rect x="106" y="33" width="1" height="1" fill="#e6e4de"/><rect x="107" y="33" width="1" height="1" fill="#e6e4de"/><rect x="108" y="33" width="1" height="1" fill="#e6e4de"/><rect x="109" y="33" width="1" height="1" fill="#e6e4de"/><rect x="110" y="33" width="1" height="1" fill="#000"/><rect x="111" y="33" width="1" height="1" fill="#000"/><rect x="100" y="34" width="1" height="1" fill="#000"/><rect x="101" y="34" width="1" height="1" fill="#e6e4de"/><rect x="102" y="34" width="1" height="1" fill="#e6e4de"/><rect x="103" y="34" width="1" height="1" fill="#e6e4de"/><rect x="104" y="34" width="1" height="1" fill="#e6e4de"/><rect x="105" y="34" width="1" height="1" fill="#e6e4de"/><rect x="106" y="34" width="1" height="1" fill="#e6e4de"/><rect x="107" y="34" width="1" height="1" fill="#e6e4de"/><rect x="108" y="34" width="1" height="1" fill="#e6e4de"/><rect x="109" y="34" width="1" height="1" fill="#e6e4de"/><rect x="110" y="34" width="1" height="1" fill="#e6e4de"/><rect x="111" y="34" width="1" height="1" fill="#000"/><rect x="100" y="35" width="1" height="1" fill="#000"/><rect x="101" y="35" width="1" height="1" fill="#e6e4de"/><rect x="102" y="35" width="1" height="1" fill="#e6e4de"/><rect x="103" y="35" width="1" height="1" fill="#e6e4de"/><rect x="104" y="35" width="1" height="1" fill="#e6e4de"/><rect x="105" y="35" width="1" height="1" fill="#e6e4de"/><rect x="106" y="35" width="1" height="1" fill="#e6e4de"/><rect x="107" y="35" width="1" height="1" fill="#e6e4de"/><rect x="108" y="35" width="1" height="1" fill="#e6e4de"/><rect x="109" y="35" width="1" height="1" fill="#e6e4de"/><rect x="110" y="35" width="1" height="1" fill="#e6e4de"/><rect x="111" y="35" width="1" height="1" fill="#000"/><rect x="99" y="36" width="1" height="1" fill="#000"/><rect x="100" y="36" width="1" height="1" fill="#e6e4de"/><rect x="101" y="36" width="1" height="1" fill="#e6e4de"/><rect x="102" y="36" width="1" height="1" fill="#e6e4de"/><rect x="103" y="36" width="1" height="1" fill="#e6e4de"/><rect x="104" y="36" width="1" height="1" fill="#e6e4de"/><rect x="105" y="36" width="1" height="1" fill="#e6e4de"/><rect x="106" y="36" width="1" height="1" fill="#e6e4de"/><rect x="107" y="36" width="1" height="1" fill="#e6e4de"/><rect x="108" y="36" width="1" height="1" fill="#e6e4de"/><rect x="109" y="36" width="1" height="1" fill="#e6e4de"/><rect x="110" y="36" width="1" height="1" fill="#e6e4de"/><rect x="111" y="36" width="1" height="1" fill="#e6e4de"/><rect x="112" y="36" width="1" height="1" fill="#000"/><rect x="99" y="37" width="1" height="1" fill="#000"/><rect x="100" y="37" width="1" height="1" fill="#e6e4de"/><rect x="101" y="37" width="1" height="1" fill="#e6e4de"/><rect x="102" y="37" width="1" height="1" fill="#e6e4de"/><rect x="103" y="37" width="1" height="1" fill="#e6e4de"/><rect x="104" y="37" width="1" height="1" fill="#e6e4de"/><rect x="105" y="37" width="1" height="1" fill="#e6e4de"/><rect x="106" y="37" width="1" height="1" fill="#e6e4de"/><rect x="107" y="37" width="1" height="1" fill="#e6e4de"/><rect x="108" y="37" width="1" height="1" fill="#e6e4de"/><rect x="109" y="37" width="1" height="1" fill="#e6e4de"/><rect x="110" y="37" width="1" height="1" fill="#e6e4de"/><rect x="111" y="37" width="1" height="1" fill="#e6e4de"/><rect x="112" y="37" width="1" height="1" fill="#000"/><rect x="100" y="38" width="1" height="1" fill="#000"/><rect x="101" y="38" width="1" height="1" fill="#e6e4de"/><rect x="102" y="38" width="1" height="1" fill="#e6e4de"/><rect x="103" y="38" width="1" height="1" fill="#e6e4de"/><rect x="104" y="38" width="1" height="1" fill="#e6e4de"/><rect x="105" y="38" width="1" height="1" fill="#e6e4de"/><rect x="106" y="38" width="1" height="1" fill="#e6e4de"/><rect x="107" y="38" width="1" height="1" fill="#e6e4de"/><rect x="108" y="38" width="1" height="1" fill="#e6e4de"/><rect x="109" y="38" width="1" height="1" fill="#e6e4de"/><rect x="110" y="38" width="1" height="1" fill="#e6e4de"/><rect x="111" y="38" width="1" height="1" fill="#000"/><rect x="100" y="39" width="1" height="1" fill="#000"/><rect x="101" y="39" width="1" height="1" fill="#e6e4de"/><rect x="102" y="39" width="1" height="1" fill="#e6e4de"/><rect x="103" y="39" width="1" height="1" fill="#e6e4de"/><rect x="104" y="39" width="1" height="1" fill="#e6e4de"/><rect x="105" y="39" width="1" height="1" fill="#e6e4de"/><rect x="106" y="39" width="1" height="1" fill="#e6e4de"/><rect x="107" y="39" width="1" height="1" fill="#e6e4de"/><rect x="108" y="39" width="1" height="1" fill="#e6e4de"/><rect x="109" y="39" width="1" height="1" fill="#e6e4de"/><rect x="110" y="39" width="1" height="1" fill="#e6e4de"/><rect x="111" y="39" width="1" height="1" fill="#000"/><rect x="100" y="40" width="1" height="1" fill="#000"/><rect x="101" y="40" width="1" height="1" fill="#000"/><rect x="102" y="40" width="1" height="1" fill="#e6e4de"/><rect x="103" y="40" width="1" height="1" fill="#e6e4de"/><rect x="104" y="40" width="1" height="1" fill="#e6e4de"/><rect x="105" y="40" width="1" height="1" fill="#e6e4de"/><rect x="106" y="40" width="1" height="1" fill="#e6e4de"/><rect x="107" y="40" width="1" height="1" fill="#e6e4de"/><rect x="108" y="40" width="1" height="1" fill="#e6e4de"/><rect x="109" y="40" width="1" height="1" fill="#e6e4de"/><rect x="110" y="40" width="1" height="1" fill="#000"/><rect x="111" y="40" width="1" height="1" fill="#000"/><rect x="101" y="41" width="1" height="1" fill="#000"/><rect x="102" y="41" width="1" height="1" fill="#000"/><rect x="103" y="41" width="1" height="1" fill="#e6e4de"/><rect x="104" y="41" width="1" height="1" fill="#e6e4de"/><rect x="105" y="41" width="1" height="1" fill="#e6e4de"/><rect x="106" y="41" width="1" height="1" fill="#e6e4de"/><rect x="107" y="41" width="1" height="1" fill="#e6e4de"/><rect x="108" y="41" width="1" height="1" fill="#e6e4de"/><rect x="109" y="41" width="1" height="1" fill="#000"/><rect x="110" y="41" width="1" height="1" fill="#000"/><rect x="102" y="42" width="1" height="1" fill="#000"/><rect x="103" y="42" width="1" height="1" fill="#000"/><rect x="104" y="42" width="1" height="1" fill="#000"/><rect x="105" y="42" width="1" height="1" fill="#e6e4de"/><rect x="106" y="42" width="1" height="1" fill="#e6e4de"/><rect x="107" y="42" width="1" height="1" fill="#000"/><rect x="108" y="42" width="1" height="1" fill="#000"/><rect x="109" y="42" width="1" height="1" fill="#000"/><rect x="105" y="43" width="1" height="1" fill="#000"/><rect x="106" y="43" width="1" height="1" fill="#000"/><rect x="103" y="36" width="6" height="2" fill="#000"/><rect x="105" y="34" width="2" height="6" fill="#000"/><polygon points="110,42 112,41 115,44 114,45" fill="#000"/><rect x="124" y="33" width="2" height="9" fill="#000"/><rect x="123" y="34" width="1" height="2" fill="#000"/><rect x="133" y="33" width="2" height="9" fill="#000"/><rect x="132" y="34" width="1" height="2" fill="#000"/><rect x="128" y="35" width="2" height="2" fill="#000"/><rect x="128" y="40" width="2" height="2" fill="#000"/><rect x="148" y="31" width="10" height="1" fill="#808080"/><rect x="147" y="31" width="1" height="9" fill="#808080"/><rect x="158" y="31" width="1" height="9" fill="#808080"/><rect x="148" y="39" width="10" height="1" fill="#808080"/><polygon points="150,40 158,32 158,40" fill="#fff"/><line x1="150" y1="40" x2="158" y2="32" stroke="#000" stroke-width="1" stroke-dasharray="1 1"/><rect x="157" y="33" width="1" height="1" fill="#000"/><rect x="157" y="34" width="1" height="1" fill="#000"/><rect x="156" y="35" width="1" height="1" fill="#000"/><rect x="156" y="36" width="1" height="1" fill="#000"/><rect x="155" y="37" width="1" height="1" fill="#000"/><rect x="157" y="37" width="1" height="1" fill="#000"/><rect x="145" y="31" width="5" height="1" fill="#000"/><rect x="147" y="29" width="1" height="5" fill="#000"/><rect x="156" y="31" width="5" height="1" fill="#000"/><rect x="158" y="29" width="1" height="5" fill="#000"/><rect x="145" y="39" width="5" height="1" fill="#000"/><rect x="147" y="37" width="1" height="5" fill="#000"/><rect x="156" y="39" width="5" height="1" fill="#000"/><rect x="158" y="37" width="1" height="5" fill="#000"/><rect x="148" y="42" width="10" height="1" fill="#ff0000"/><rect x="148" y="41" width="2" height="3" fill="#ff0000"/><rect x="156" y="41" width="2" height="3" fill="#ff0000"/><rect x="168" y="41" width="16" height="4" fill="#000080"/><rect x="171" y="38" width="5" height="7" fill="#000080"/><rect x="176" y="34" width="5" height="11" fill="#000080"/><rect x="181" y="42" width="3" height="3" fill="#000080"/><rect x="168" y="41" width="3" height="1" fill="#00ffff"/><rect x="168" y="41" width="1" height="2" fill="#00ffff"/><rect x="171" y="38" width="4" height="1" fill="#00ffff"/><rect x="171" y="38" width="1" height="6" fill="#00ffff"/><rect x="176" y="35" width="2" height="1" fill="#00ffff"/><rect x="176" y="35" width="1" height="9" fill="#00ffff"/><rect x="182" y="42" width="1" height="2" fill="#00ffff"/><rect x="168" y="36" width="1" height="1" fill="#ff0000"/><rect x="169" y="35" width="1" height="1" fill="#ff0000"/><rect x="170" y="34" width="1" height="1" fill="#ff0000"/><rect x="171" y="33" width="1" height="1" fill="#ff0000"/><rect x="172" y="30" width="3" height="3" fill="#ff0000"/><rect x="173" y="31" width="1" height="1" fill="#fff"/><rect x="175" y="32" width="1" height="1" fill="#ff0000"/><rect x="176" y="33" width="1" height="1" fill="#ff0000"/><rect x="177" y="34" width="1" height="1" fill="#ff0000"/><rect x="178" y="35" width="1" height="1" fill="#ff0000"/><rect x="179" y="36" width="1" height="1" fill="#ff0000"/><rect x="180" y="37" width="1" height="1" fill="#ff0000"/><rect x="181" y="38" width="1" height="1" fill="#ff0000"/><rect x="182" y="39" width="1" height="1" fill="#ff0000"/><rect x="182" y="40" width="1" height="1" fill="#ff0000"/><rect x="183" y="39" width="1" height="1" fill="#ff0000"/><rect x="183" y="38" width="1" height="1" fill="#ff0000"/><rect x="184" y="38" width="1" height="1" fill="#ff0000"/><rect x="191" y="30" width="16" height="15" fill="#000"/><rect x="192" y="31" width="14" height="5" fill="#fff"/><rect x="192" y="34" width="10" height="1" fill="#c0c0c0"/><rect x="192" y="36" width="14" height="4" fill="#000080"/><rect x="192" y="40" width="14" height="4" fill="#fff"/><rect x="202" y="31" width="1" height="13" fill="#000"/><rect x="193" y="32" width="1" height="1" fill="#000"/><rect x="194" y="32" width="1" height="1" fill="#000"/><rect x="196" y="32" width="1" height="1" fill="#000"/><rect x="197" y="32" width="1" height="1" fill="#000"/><rect x="199" y="32" width="1" height="1" fill="#000"/><rect x="200" y="32" width="1" height="1" fill="#000"/><rect x="193" y="33" width="1" height="1" fill="#000"/><rect x="195" y="33" width="1" height="1" fill="#000"/><rect x="197" y="33" width="1" height="1" fill="#000"/><rect x="198" y="33" width="1" height="1" fill="#000"/><rect x="200" y="33" width="1" height="1" fill="#000"/><rect x="201" y="33" width="1" height="1" fill="#000"/><rect x="193" y="37" width="1" height="1" fill="#fff"/><rect x="194" y="37" width="1" height="1" fill="#fff"/><rect x="196" y="37" width="1" height="1" fill="#fff"/><rect x="197" y="37" width="1" height="1" fill="#fff"/><rect x="199" y="37" width="1" height="1" fill="#fff"/><rect x="200" y="37" width="1" height="1" fill="#fff"/><rect x="193" y="38" width="1" height="1" fill="#fff"/><rect x="195" y="38" width="1" height="1" fill="#fff"/><rect x="197" y="38" width="1" height="1" fill="#fff"/><rect x="198" y="38" width="1" height="1" fill="#fff"/><rect x="200" y="38" width="1" height="1" fill="#fff"/><rect x="201" y="38" width="1" height="1" fill="#fff"/><rect x="193" y="41" width="1" height="1" fill="#000"/><rect x="194" y="41" width="1" height="1" fill="#000"/><rect x="196" y="41" width="1" height="1" fill="#000"/><rect x="197" y="41" width="1" height="1" fill="#000"/><rect x="199" y="41" width="1" height="1" fill="#000"/><rect x="200" y="41" width="1" height="1" fill="#000"/><rect x="193" y="42" width="1" height="1" fill="#000"/><rect x="195" y="42" width="1" height="1" fill="#000"/><rect x="197" y="42" width="1" height="1" fill="#000"/><rect x="198" y="42" width="1" height="1" fill="#000"/><rect x="200" y="42" width="1" height="1" fill="#000"/><rect x="201" y="42" width="1" height="1" fill="#000"/><rect x="203" y="31" width="3" height="5" fill="#e8e8e8"/><rect x="203" y="41" width="1" height="1" fill="#000"/><rect x="205" y="42" width="1" height="1" fill="#000"/><rect x="242" y="30" width="7" height="2" fill="#ffff00"/><rect x="240" y="32" width="3" height="4" fill="#ffff00"/><rect x="248" y="31" width="3" height="5" fill="#ffff00"/><rect x="246" y="35" width="3" height="2" fill="#ffff00"/><rect x="244" y="37" width="3" height="2" fill="#ffff00"/><rect x="243" y="38" width="3" height="3" fill="#ffff00"/><rect x="243" y="42" width="3" height="3" fill="#ffff00"/><rect x="241" y="31" width="1" height="1" fill="#ffff00"/><rect x="249" y="30" width="1" height="1" fill="#ffff00"/><polyline points="247,41 250,39 252,39" fill="none" stroke="#808080" stroke-width="2"/><rect x="246" y="43" width="4" height="2" fill="#808080"/><rect x="249" y="42" width="2" height="1" fill="#808080"/></svg>
<div class="t" style="left:24px;top:7px;white-space:nowrap;font-size:11px;line-height:13px;font-weight:bold;letter-spacing:0.25px;color:#fff;-webkit-text-stroke:0.3px #fff">Graph Window</div>
<div class="t" style="left:279px;top:28px;white-space:nowrap;font-size:14px;line-height:16px;letter-spacing:-0.5px;color:#000">X=46; Y=84</div>
<div class="t" style="left:4px;top:63px;white-space:nowrap;font-size:16px;line-height:18px;letter-spacing:-0.65px;color:#000;width:600px"><div style="position:static;width:600px;text-align:center">Момент изгиба в вертикальной плоскости</div></div>
<div class="t" style="left:261px;top:491px;white-space:nowrap;font-size:11px;line-height:13px;font-weight:bold;letter-spacing:0.15px;color:#000;-webkit-text-stroke:0.3px #000">Расстояние, мм</div>
<div class="t" style="left:10px;top:352px;width:140px;height:17px;white-space:nowrap;font-size:14px;line-height:17px;font-weight:bold;letter-spacing:-0.68px;color:#000;-webkit-text-stroke:0.3px #000;transform-origin:0 0;transform:rotate(-90deg)">Момент изгиба, Н х м</div>
<div class="t" style="left:217px;top:28px;white-space:nowrap;font-family:'Liberation Serif',serif;font-size:18px;line-height:20px;font-weight:bold;color:#000080">F</div>
</body></html>
